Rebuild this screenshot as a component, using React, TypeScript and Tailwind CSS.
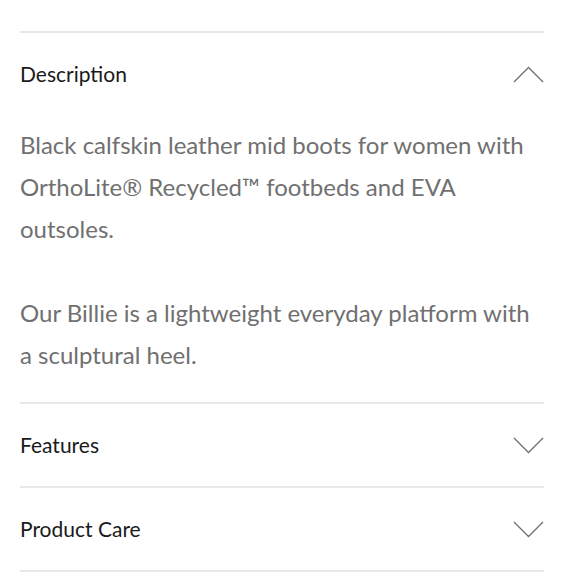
import React from "react";

function Chevron({ up }: { up?: boolean }) {
  return (
    <svg width="31" height="17" viewBox="0 0 31 17" fill="none" className="shrink-0">
      <path
        d={up ? "M1 16 L15.5 1.5 L30 16" : "M1 1 L15.5 15.5 L30 1"}
        stroke="#707070"
        strokeWidth="1.3"
      />
    </svg>
  );
}

function Row({ title, up }: { title: string; up?: boolean }) {
  return (
    <div className="flex items-center justify-between h-[82px]">
      <span className="text-[21px] leading-[28px] text-[#1a1a1a] -mt-[1px]">{title}</span>
      <Chevron up={up} />
    </div>
  );
}

export default function App() {
  return (
    <div className="w-[580px] h-[580px] bg-white pt-[31px] pl-[20px] pr-[36px]" style={{ fontFamily: 'Lato, sans-serif' }}>
      <div className="border-t-2 border-[#e8e8e8]">
        <Row title="Description" up />
        <div className="text-[24px] leading-[42px] text-[#707070] mt-[9px] pb-[26px]">
          <p>Black calfskin leather mid boots for women with OrthoLite® Recycled™ footbeds and EVA outsoles.</p>
          <p className="mt-[42px]">Our Billie is a lightweight everyday platform with a sculptural heel.</p>
        </div>
      </div>
      <div className="border-t-2 border-[#e8e8e8]">
        <Row title="Features" />
      </div>
      <div className="border-t-2 border-[#e8e8e8]">
        <Row title="Product Care" />
      </div>
      <div className="border-t-2 border-[#e8e8e8]" />
    </div>
  );
}
